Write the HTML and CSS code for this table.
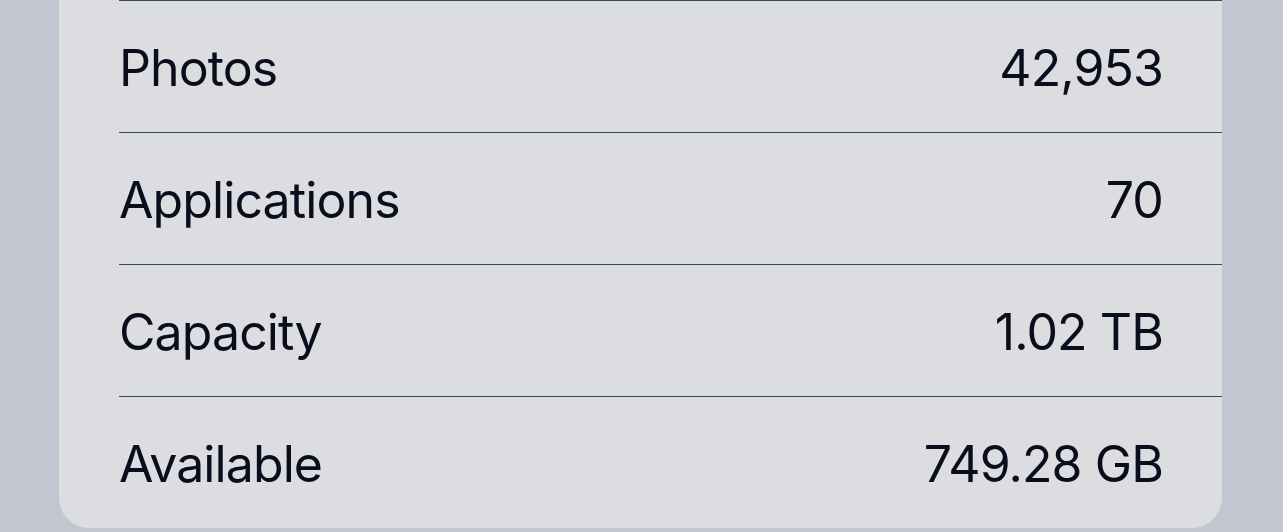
FILE: index.html
```html
<!DOCTYPE html>
<html>
<head>
<meta charset="utf-8">
<link rel="stylesheet" href="styles.css">
</head>
<body>
<div class="card">
  <div class="row"><span class="label">Photos</span><span class="value">42,953</span></div>
  <div class="row"><span class="label">Applications</span><span class="value">70</span></div>
  <div class="row"><span class="label">Capacity</span><span class="value">1.02 TB</span></div>
  <div class="row"><span class="label">Available</span><span class="value">749.28 GB</span></div>
</div>
</body>
</html>
```
FILE: styles.css
```css
html, body {
  margin: 0;
  padding: 0;
  background: #c3c5d0;
  height: 532px;
  overflow: hidden;
}
.card {
  margin-left: 59px;
  width: 1163px;
  background: #dcdde1;
  border-radius: 0 0 30px 30px;
  padding-left: 60px;
  box-sizing: border-box;
  font-family: Inter, "Noto Sans", sans-serif;
  color: #0b0d1d;
}
.row {
  display: flex;
  justify-content: space-between;
  align-items: center;
  border-top: 1px solid #3e4757;
  padding-right: 59px;
  padding-top: 2px;
  box-sizing: content-box;
  height: 129px;
  font-size: 50px;
  line-height: 60px;
}
.label, .value {
  letter-spacing: -0.9px;
}
```
